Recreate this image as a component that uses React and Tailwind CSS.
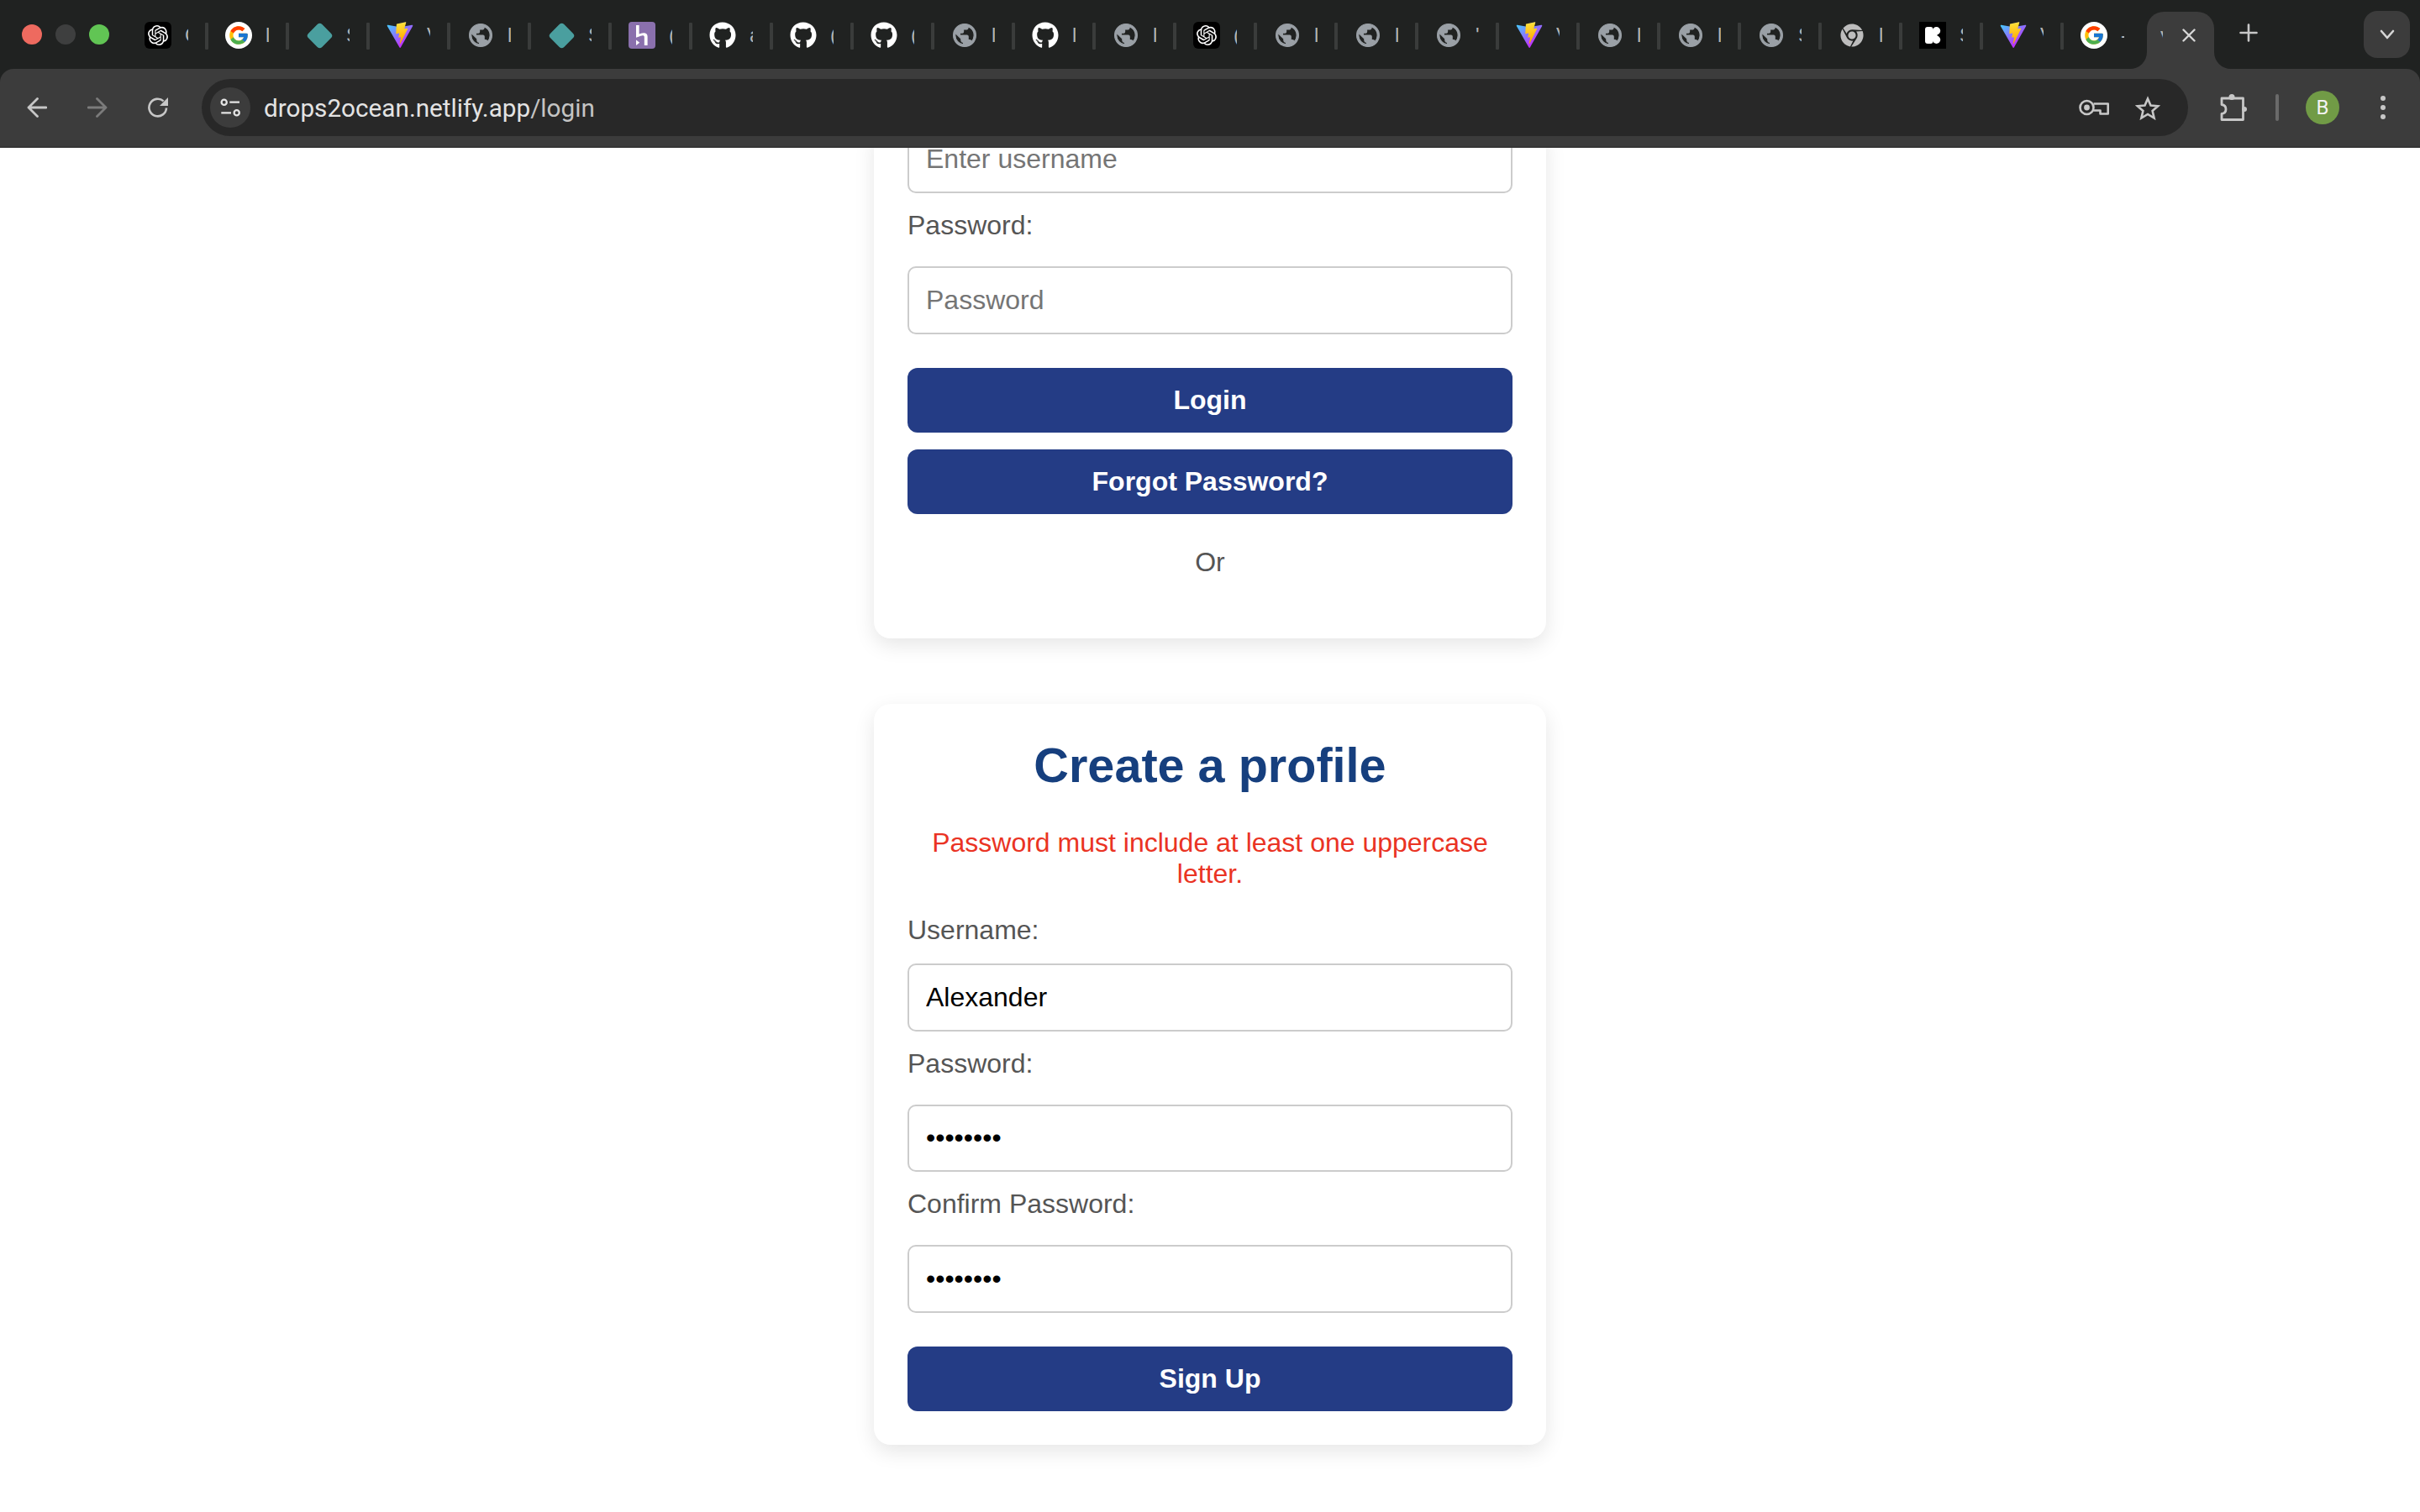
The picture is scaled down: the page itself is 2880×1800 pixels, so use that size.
import React from "react";
import { FaChrome, FaGithub } from "react-icons/fa";
import { FcGoogle } from "react-icons/fc";
import { SiOpenai } from "react-icons/si";

const tabs = [
  ["openai", "C"], ["google", "l"], ["diamond", "S"], ["vite", "V"], ["globe", "l"],
  ["diamond", "S"], ["heroku", "("], ["github", "a"], ["github", "("], ["github", "("],
  ["globe", "l"], ["github", "l"], ["globe", "l"], ["openai", "("], ["globe", "l"],
  ["globe", "l"], ["globe", "'"], ["vite", "V"], ["globe", "l"], ["globe", "l"],
  ["globe", "S"], ["chrome", "l"], ["kit", "S"], ["vite", "V"], ["google", "-"],
];

function ViteIcon({ id }) {
  return (
    <svg viewBox="0 0 410 404" className="h-8 w-8">
      <defs>
        <linearGradient id={`vite-a-${id}`} x1="6" y1="33" x2="235" y2="344" gradientUnits="userSpaceOnUse">
          <stop stopColor="#41D1FF" />
          <stop offset="1" stopColor="#BD34FE" />
        </linearGradient>
        <linearGradient id={`vite-b-${id}`} x1="194.65" y1="8.82" x2="236.08" y2="292.99" gradientUnits="userSpaceOnUse">
          <stop stopColor="#FFEA83" />
          <stop offset="0.083" stopColor="#FFDD35" />
          <stop offset="1" stopColor="#FFA800" />
        </linearGradient>
      </defs>
      <path fill={`url(#vite-a-${id})`} d="M399.641 59.5246L215.643 388.545C211.844 395.338 202.084 395.378 198.228 388.618L10.5817 59.5563C6.38087 52.1896 12.6802 43.2665 21.0281 44.7586L205.223 77.6824C206.398 77.8924 207.601 77.8904 208.776 77.6763L389.119 44.8058C397.439 43.2894 403.768 52.1434 399.641 59.5246Z" />
      <path fill={`url(#vite-b-${id})`} d="M292.965 1.5744L156.801 28.2552C154.563 28.6937 152.906 30.5903 152.771 32.8664L144.395 174.33C144.198 177.662 147.258 180.248 150.51 179.498L188.42 170.749C191.967 169.931 195.172 173.055 194.443 176.622L183.18 231.775C182.422 235.487 185.907 238.661 189.532 237.56L212.947 230.446C216.577 229.344 220.065 232.527 219.297 236.242L201.398 322.875C200.278 328.294 207.486 331.249 210.492 326.603L212.5 323.5L323.454 102.072C325.312 98.3645 322.108 94.137 318.036 94.9228L279.014 102.454C275.347 103.161 272.227 99.746 273.262 96.1583L298.731 7.86689C299.767 4.27314 296.636 0.855181 292.965 1.5744Z" />
    </svg>
  );
}

function Favicon({ type, id }) {
  if (type === "openai") {
    return (
      <div className="flex h-8 w-8 items-center justify-center rounded-[6px] bg-black">
        <SiOpenai className="h-6 w-6 text-white" />
      </div>
    );
  }
  if (type === "google") {
    return (
      <div className="flex h-8 w-8 items-center justify-center rounded-full bg-white">
        <FcGoogle className="h-[26px] w-[26px]" />
      </div>
    );
  }
  if (type === "diamond") {
    return (
      <div className="flex h-8 w-8 items-center justify-center">
        <div className="h-[23px] w-[23px] rotate-45 rounded-[4px] bg-[#4a9f9f]" />
      </div>
    );
  }
  if (type === "vite") return <ViteIcon id={id} />;
  if (type === "github") {
    return (
      <div className="flex h-8 w-8 items-center justify-center">
        <FaGithub className="h-8 w-8 text-white" />
      </div>
    );
  }
  if (type === "chrome") {
    return (
      <div className="flex h-8 w-8 items-center justify-center">
        <FaChrome className="h-7 w-7 text-[#bdbdbd]" />
      </div>
    );
  }
  if (type === "heroku") {
    return (
      <svg viewBox="0 0 32 32" className="h-8 w-8">
        <rect width="32" height="32" rx="4" fill="#8a70ad" />
        <path d="M9 4h3.6v10.5c3.4-1.3 10-2.8 10 3.2V28h-3.8V18c0-2.4-3-1.8-6.2-.6L9 18.8z" fill="#fff" />
        <path d="M9 28v-6.5l4.2 3.2z" fill="#fff" />
      </svg>
    );
  }
  if (type === "kit") {
    return (
      <svg viewBox="0 0 32 32" className="h-8 w-8">
        <rect width="32" height="32" fill="#000" />
        <rect x="7" y="6" width="9.5" height="20" rx="3" fill="#fff" />
        <circle cx="20.5" cy="10.7" r="4.7" fill="#fff" />
        <circle cx="20.5" cy="21.3" r="4.7" fill="#fff" />
        <rect x="15" y="11" width="6.5" height="10" fill="#fff" />
      </svg>
    );
  }
  return (
    <div className="flex h-8 w-8 items-center justify-center">
      <svg viewBox="2 2 20 20" className="h-7 w-7" fill="#9aa0a6" stroke="#9aa0a6" strokeWidth="0.8">
        <path d="M12 2.4C6.7 2.4 2.4 6.7 2.4 12s4.3 9.6 9.6 9.6 9.6-4.3 9.6-9.6S17.3 2.4 12 2.4zm-1 17.53c-3.95-.49-7-3.85-7-7.93 0-.62.08-1.21.21-1.79L9 15v1c0 1.1.9 2 2 2v1.93zm6.9-2.54c-.26-.81-1-1.39-1.9-1.39h-1v-3c0-.55-.45-1-1-1H8v-2h2c.55 0 1-.45 1-1V7h2c1.1 0 2-.9 2-2v-.41c2.93 1.19 5 4.06 5 7.41 0 2.08-.8 3.97-2.1 5.39z" />
      </svg>
    </div>
  );
}

function Tab({ type, letter, index }) {
  return (
    <div className="mt-[2px] flex h-8 w-[96px] shrink-0 items-center">
      {/* first tab has no divider in front of it */}
      <div className={index === 0 ? "h-8 w-1" : "mt-px h-8 w-1 rounded-[1px] bg-[#3a3c3b]"} />
      <div className="ml-5 shrink-0">
        <Favicon type={type} id={index} />
      </div>
      <span className="ml-4 w-1 overflow-hidden text-[24px] leading-8 text-[#b5b5b5]">{letter}</span>
    </div>
  );
}

function TabStrip() {
  return (
    <div className="flex h-[82px] shrink-0 items-center">
      <div className="flex w-[148px] shrink-0 items-center gap-4 pl-[26px]">
        <div className="h-6 w-6 rounded-full bg-[#ee6a5f]" />
        <div className="h-6 w-6 rounded-full bg-[#3e3f3f]" />
        <div className="h-6 w-6 rounded-full bg-[#61c554]" />
      </div>
      {tabs.map(([type, letter], i) => (
        <Tab key={i} type={type} letter={letter} index={i} />
      ))}
      <div className="relative ml-[7px] flex h-[68px] w-[80px] shrink-0 items-start self-end rounded-t-[20px] bg-[#3c3c3c] pt-[20px]">
        <svg viewBox="0 0 20 20" className="absolute bottom-0 -left-5 h-5 w-5" fill="#3c3c3c">
          <path d="M0 20A20 20 0 0 0 20 0V20Z" />
        </svg>
        <svg viewBox="0 0 20 20" className="absolute -right-5 bottom-0 h-5 w-5" fill="#3c3c3c">
          <path d="M20 20A20 20 0 0 1 0 0V20Z" />
        </svg>
        <span className="ml-4 w-[3px] overflow-hidden text-[24px] leading-6 text-[#b5b5b5]">V</span>
        <svg viewBox="0 0 16 16" className="ml-[23px] h-4 w-4" stroke="#d6d6d6" strokeWidth="2.4" strokeLinecap="round">
          <path d="M1.5 1.5l13 13M14.5 1.5l-13 13" />
        </svg>
      </div>
      <svg viewBox="0 0 22 22" className="mb-[4px] ml-[30px] h-[22px] w-[22px]" stroke="#c7c7c7" strokeWidth="2.6" strokeLinecap="round">
        <path d="M11 1.5v19M1.5 11h19" />
      </svg>
      <div className="mr-3 ml-auto flex h-14 w-[55px] shrink-0 items-center justify-center rounded-[16px] bg-[#3c3c3c]">
        <svg viewBox="0 0 18 12" className="h-3 w-[18px]" fill="none" stroke="#d6d6d6" strokeWidth="2.6" strokeLinecap="round" strokeLinejoin="round">
          <path d="M2 2l7 8 7-8" />
        </svg>
      </div>
    </div>
  );
}

function Toolbar() {
  return (
    <div className="flex h-[94px] shrink-0 items-center rounded-t-[16px] border-b-2 border-[#363636] bg-[#3c3c3c] pr-[41px] pl-8">
      <svg viewBox="0 0 24 24" className="h-6 w-6" fill="none" stroke="#c7c7c7" strokeWidth="2.8" strokeLinecap="round" strokeLinejoin="round">
        <path d="M23 12H2M12.5 1.5L2 12l10.5 10.5" />
      </svg>
      <svg viewBox="0 0 24 24" className="ml-12 h-6 w-6" fill="none" stroke="#7b7b7b" strokeWidth="2.8" strokeLinecap="round" strokeLinejoin="round">
        <path d="M1 12h21M11.5 1.5L22 12 11.5 22.5" />
      </svg>
      <svg viewBox="0 0 24 24" className="ml-12 h-6 w-6" fill="none" stroke="#c7c7c7" strokeWidth="2.6">
        <path d="M22 12.5A10.3 10.3 0 1 1 18.6 4.4" />
        <path d="M24 0v10H14z" fill="#c7c7c7" stroke="none" />
      </svg>
      <div className="ml-10 flex h-[68px] flex-1 items-center rounded-full bg-[#282828] pr-[33px] pl-[10px]">
        <div className="flex h-12 w-12 items-center justify-center rounded-full bg-[#3c3c3c]">
          <svg viewBox="0 0 24 24" className="h-6 w-6" fill="none" stroke="#e3e3e3" strokeWidth="2.3">
            <circle cx="4.7" cy="5.7" r="3.1" />
            <path d="M11.3 5.7H23M1.3 18.3H13" />
            <circle cx="19.7" cy="18.3" r="3.1" />
          </svg>
        </div>
        <span className="mt-[2px] ml-4 font-['Roboto',sans-serif] text-[29.7px] text-[#e3e3e3]">
          drops2ocean.netlify.app<span className="text-[#c4c4c4]">/login</span>
        </span>
        <svg viewBox="0 0 36 20" className="ml-auto h-5 w-9" fill="none" stroke="#c7c7c7" strokeWidth="2.6" strokeLinejoin="round">
          <circle cx="9.5" cy="10" r="8" />
          <circle cx="9.5" cy="10" r="3.4" fill="#c7c7c7" stroke="none" />
          <path d="M17.5 5.5H34.7V17.5H25.5V13.5H17.5" />
        </svg>
        <svg viewBox="0 0 30 29" className="ml-[31px] h-[29px] w-[30px]" fill="none" stroke="#c7c7c7" strokeWidth="2.6">
          <path d="M15 3.5L18.5 11.5 27.2 12.3 20.6 18 22.6 26.5 15 22 7.4 26.5 9.4 18 2.8 12.3 11.5 11.5Z" />
        </svg>
      </div>
      <svg viewBox="0 0 32 32" className="ml-[38px] h-8 w-8" fill="none" stroke="#c7c7c7" strokeWidth="2.8" strokeLinejoin="round">
        <path d="M2 5H27.5V30.5H2V23.5C5.5 23 7 21 7 18S5.5 13 2 12.5Z" />
        <circle cx="14" cy="3.5" r="3.5" fill="#c7c7c7" stroke="none" />
        <circle cx="29" cy="18" r="3" fill="#c7c7c7" stroke="none" />
      </svg>
      <div className="ml-[34px] h-8 w-1 rounded-sm bg-[#6a6a6a]" />
      <div className="ml-8 flex h-10 w-10 items-center justify-center rounded-full bg-[#719b46] font-['Roboto',sans-serif] text-[24px] text-[#f3f3f3]">
        B
      </div>
      <div className="ml-[49px] flex w-1.5 flex-col gap-[5px]">
        <div className="h-1.5 w-1.5 rounded-full bg-[#c7c7c7]" />
        <div className="h-1.5 w-1.5 rounded-full bg-[#c7c7c7]" />
        <div className="h-1.5 w-1.5 rounded-full bg-[#c7c7c7]" />
      </div>
    </div>
  );
}

function Field({ label, labelClass, ...props }) {
  return (
    <>
      {label && <label className={`block text-[32px] leading-[37px] text-[#555] ${labelClass}`}>{label}</label>}
      <input
        readOnly
        {...props}
        className="block h-[80.5px] w-full rounded-[10px] border-2 border-[#ccc] bg-white px-5 text-[32px] text-black placeholder:text-[#757575]"
      />
    </>
  );
}

function PrimaryButton({ className, children }) {
  return (
    <button className={`block h-[77px] w-full rounded-[12px] bg-[#243c85] text-[32px] font-bold text-white ${className}`}>
      {children}
    </button>
  );
}

const card = "w-[800px] shrink-0 rounded-[20px] bg-white px-10 shadow-[0_8px_24px_rgba(0,0,0,0.1)]";
const passwordLabel = "mt-5 mb-[30px]";

export default function App() {
  return (
    <div className="flex h-screen flex-col overflow-hidden bg-[#202221] font-['Liberation_Sans',Arial,sans-serif]">
      <TabStrip />
      <Toolbar />
      <main className="flex min-h-0 flex-1 flex-col items-center overflow-hidden bg-white">
        <div className={`${card} -mt-[26.5px] pb-[72px]`}>
          <Field type="text" placeholder="Enter username" />
          <Field type="password" label="Password:" labelClass={passwordLabel} placeholder="Password" />
          <PrimaryButton className="mt-10">Login</PrimaryButton>
          <PrimaryButton className="mt-5">Forgot Password?</PrimaryButton>
          <p className="mt-[39px] text-center text-[32px] leading-[37px] text-[#555]">Or</p>
        </div>

        <div className={`${card} mt-[78.5px] pt-10 pb-10`}>
          <h2 className="text-center text-[57.6px] leading-[67px] font-bold text-[#163f7e]">Create a profile</h2>
          <p className="mt-10 text-center text-[32px] leading-[37px] text-[#ea3323]">
            Password must include at least one uppercase letter.
          </p>
          <Field type="text" label="Username:" labelClass="mt-[30px] mb-[21px]" value="Alexander" />
          <Field type="password" label="Password:" labelClass={passwordLabel} value="password" />
          <Field type="password" label="Confirm Password:" labelClass={passwordLabel} value="password" />
          <PrimaryButton className="mt-10">Sign Up</PrimaryButton>
        </div>
      </main>
    </div>
  );
}
